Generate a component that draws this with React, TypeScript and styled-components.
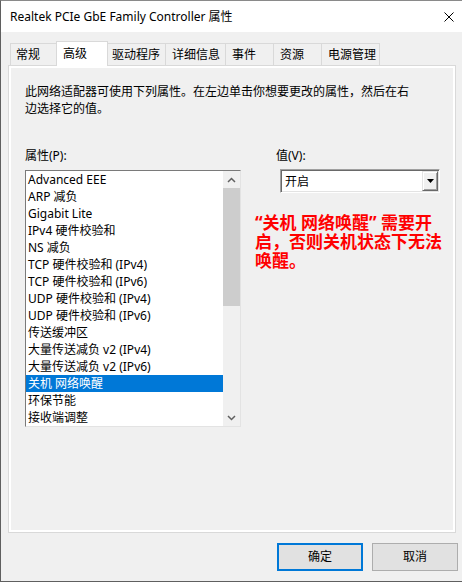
import React from 'react';
import styled, { createGlobalStyle } from 'styled-components';

const GlobalStyle = createGlobalStyle`
  html, body { margin: 0; padding: 0; background: #f0f0f0; }
  body {
    font-family: "Noto Sans", "Noto Sans CJK SC", sans-serif;
    font-size: 12px;
    color: #000;
  }
  * { box-sizing: border-box; }
`;

const Window = styled.div`
  width: 462px;
  height: 582px;
  display: flex;
  flex-direction: column;
  background: #f0f0f0;
  border-left: 1px solid #5f5f5f;
  border-top: 1px solid #8a8a8a;
  border-bottom: 1px solid #5f5f5f;
  overflow: hidden;
`;

const TitleBar = styled.div`
  height: 31px;
  flex: none;
  background: #fff;
  display: flex;
  align-items: center;
  justify-content: space-between;
  padding: 0 8px 0 9px;
  font-size: 12px;
  line-height: 16px;
`;

const CloseGlyph = styled.svg`
  width: 10px;
  height: 10px;
  display: block;
`;

const Body = styled.div`
  flex: 1;
  display: flex;
  flex-direction: column;
  padding: 9px 0 0 7px;
`;

const TabStrip = styled.div`
  display: flex;
  align-items: flex-end;
  height: 24px;
  margin-left: 2px;
  position: relative;
  z-index: 1;
`;

const Tab = styled.div<{ $w: number; $active?: boolean; $pl: number; $noLeft?: boolean; $last?: boolean }>`
  width: ${p => p.$w}px;
  height: ${p => (p.$active ? 25 : 22)}px;
  margin-bottom: ${p => (p.$active ? -1 : 0)}px;
  padding-left: ${p => p.$pl}px;
  display: flex;
  align-items: center;
  background: ${p => (p.$active ? '#fff' : '#f0f0f0')};
  border-top: 1px solid #d9d9d9;
  border-left: ${p => (p.$noLeft ? 'none' : '1px solid #d9d9d9')};
  border-right: ${p => (p.$active || p.$last ? '1px solid #d9d9d9' : 'none')};
  line-height: 16px;
  white-space: nowrap;
  padding-bottom: ${p => (p.$active ? 1 : 0)}px;
`;

const Panel = styled.div`
  width: 448px;
  height: 468px;
  border: 1px solid #d9d9d9;
  background: #fff;
  padding: 2px;
`;

const PanelInner = styled.div`
  height: 100%;
  background: #f0f0f0;
  padding: 15px 0 0 14px;
`;

const Description = styled.p`
  margin: 0;
  width: 388px;
  line-height: 17px;
`;

const Columns = styled.div`
  display: flex;
  margin-top: 30px;
`;

const LeftCol = styled.div`
  width: 216px;
  display: flex;
  flex-direction: column;
`;

const RightCol = styled.div`
  width: 192px;
  margin-left: 14px;
  display: flex;
  flex-direction: column;
`;

const FieldLabel = styled.div<{ $indent?: number }>`
  line-height: 17px;
  padding-left: ${p => p.$indent ?? 0}px;
`;

const ListBox = styled.div`
  margin-top: 6px;
  width: 216px;
  height: 257px;
  display: flex;
  background: #fff;
  border: 1px solid;
  border-color: #7a7a7a #e3e3e3 #e3e3e3 #7a7a7a;
`;

const Items = styled.div`
  flex: 1;
  display: flex;
  flex-direction: column;
  overflow: hidden;
`;

const Item = styled.div<{ $selected?: boolean }>`
  height: 17px;
  flex: none;
  line-height: 17px;
  padding-left: 2px;
  white-space: nowrap;
  background: ${p => (p.$selected ? '#0078d7' : 'transparent')};
  color: ${p => (p.$selected ? '#fff' : '#000')};
`;

const ScrollBar = styled.div`
  width: 17px;
  display: flex;
  flex-direction: column;
  background: #f0f0f0;
`;

const ScrollArrow = styled.div`
  height: 17px;
  flex: none;
  display: flex;
  align-items: center;
  justify-content: center;
`;

const ScrollTrack = styled.div`
  flex: 1;
  display: flex;
  flex-direction: column;
`;

const ScrollThumb = styled.div`
  height: 118px;
  background: #cdcdcd;
`;

const Select = styled.div`
  margin: 5px 0 0 25px;
  width: 160px;
  height: 24px;
  display: flex;
  align-items: stretch;
  background: #fff;
  border: 1px solid;
  border-color: #a0a0a0 #fff #fff #a0a0a0;
  box-shadow: inset 1px 1px 0 #696969, inset -1px -1px 0 #e3e3e3;
  padding: 1px;
`;

const SelectValue = styled.div`
  flex: 1;
  padding-left: 3px;
  display: flex;
  align-items: center;
  line-height: 17px;
`;

const SelectButton = styled.div`
  width: 16px;
  background: #f0f0f0;
  display: flex;
  align-items: center;
  justify-content: center;
  border: 1px solid;
  border-color: #e3e3e3 #696969 #696969 #e3e3e3;
  box-shadow: inset 1px 1px 0 #fff, inset -1px -1px 0 #a0a0a0;
`;

const Note = styled.div`
  margin-top: 20px;
  width: 192px;
  color: #ff0000;
  font-family: "Noto Sans", "Noto Sans CJK SC", sans-serif;
  font-weight: bold;
  font-size: 17px;
  line-height: 19px;
`;

const ButtonRow = styled.div`
  display: flex;
  justify-content: flex-end;
  gap: 9px;
  padding: 10px 4px 0 0;
`;

const DialogButton = styled.button<{ $default?: boolean }>`
  width: 86px;
  height: 28px;
  background: #e1e1e1;
  border: ${p => (p.$default ? '2px solid #0078d7' : '1px solid #adadad')};
  font-family: "Noto Sans", "Noto Sans CJK SC", sans-serif;
  font-size: 12px;
  color: #000;
  padding: 0;
  line-height: 16px;
`;

const tabs = [
  { label: '常规', w: 46, pl: 5 },
  { label: '高级', w: 52, pl: 6, active: true },
  { label: '驱动程序', w: 57, pl: 4, noLeft: true },
  { label: '详细信息', w: 60, pl: 6 },
  { label: '事件', w: 48, pl: 6 },
  { label: '资源', w: 48, pl: 6 },
  { label: '电源管理', w: 59, pl: 6, last: true },
];

const items = [
  'Advanced EEE',
  'ARP 减负',
  'Gigabit Lite',
  'IPv4 硬件校验和',
  'NS 减负',
  'TCP 硬件校验和 (IPv4)',
  'TCP 硬件校验和 (IPv6)',
  'UDP 硬件校验和 (IPv4)',
  'UDP 硬件校验和 (IPv6)',
  '传送缓冲区',
  '大量传送减负 v2 (IPv4)',
  '大量传送减负 v2 (IPv6)',
  '关机 网络唤醒',
  '环保节能',
  '接收端调整',
];

const Chevron: React.FC<{ down?: boolean }> = ({ down }) => (
  <svg width="9" height="6" viewBox="0 0 9 6">
    <polyline
      points={down ? '1,1 4.5,4.5 8,1' : '1,5 4.5,1.5 8,5'}
      fill="none"
      stroke="#606060"
      strokeWidth="1.5"
    />
  </svg>
);

export default function App() {
  return (
    <>
      <GlobalStyle />
      <Window>
        <TitleBar>
          <span>Realtek PCIe GbE Family Controller 属性</span>
          <CloseGlyph viewBox="0 0 10 10">
            <path d="M0.5 0.5 L9.5 9.5 M9.5 0.5 L0.5 9.5" stroke="#000" strokeWidth="1" />
          </CloseGlyph>
        </TitleBar>
        <Body>
          <TabStrip>
            {tabs.map(t => (
              <Tab key={t.label} $w={t.w} $pl={t.pl} $active={t.active} $noLeft={t.noLeft} $last={t.last}>
                {t.label}
              </Tab>
            ))}
          </TabStrip>
          <Panel>
            <PanelInner>
              <Description>
                此网络适配器可使用下列属性。在左边单击你想要更改的属性，然后在右边选择它的值。
              </Description>
              <Columns>
                <LeftCol>
                  <FieldLabel>属性(P):</FieldLabel>
                  <ListBox>
                    <Items>
                      {items.map(it => (
                        <Item key={it} $selected={it === '关机 网络唤醒'}>
                          {it}
                        </Item>
                      ))}
                    </Items>
                    <ScrollBar>
                      <ScrollArrow>
                        <Chevron />
                      </ScrollArrow>
                      <ScrollTrack>
                        <ScrollThumb />
                      </ScrollTrack>
                      <ScrollArrow>
                        <Chevron down />
                      </ScrollArrow>
                    </ScrollBar>
                  </ListBox>
                </LeftCol>
                <RightCol>
                  <FieldLabel $indent={21}>值(V):</FieldLabel>
                  <Select>
                    <SelectValue>开启</SelectValue>
                    <SelectButton>
                      <svg width="7" height="4" viewBox="0 0 7 4">
                        <polygon points="0,0 7,0 3.5,4" fill="#000" />
                      </svg>
                    </SelectButton>
                  </Select>
                  <Note>“关机 网络唤醒” 需要开启，否则关机状态下无法唤醒。</Note>
                </RightCol>
              </Columns>
            </PanelInner>
          </Panel>
          <ButtonRow>
            <DialogButton $default>确定</DialogButton>
            <DialogButton>取消</DialogButton>
          </ButtonRow>
        </Body>
      </Window>
    </>
  );
}
